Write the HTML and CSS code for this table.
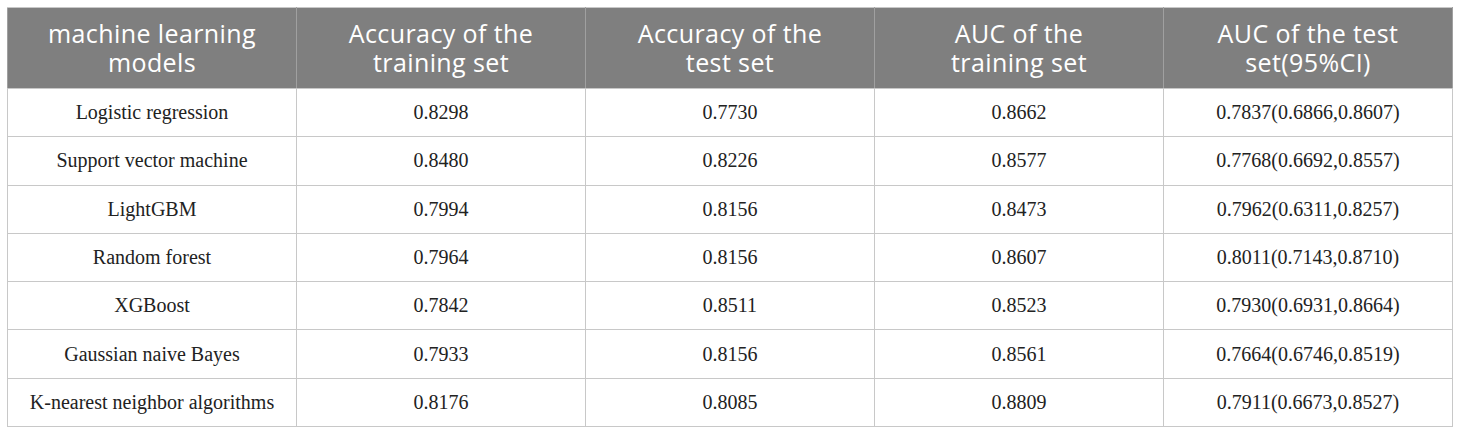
FILE: index.html
```html
<!DOCTYPE html>
<html>
<head>
<meta charset="utf-8">
<link rel="stylesheet" href="styles.css">
</head>
<body>
<table class="results">
  <thead>
    <tr>
      <th>machine learning<br>models</th>
      <th>Accuracy of the<br>training set</th>
      <th>Accuracy of the<br>test set</th>
      <th>AUC of the<br>training set</th>
      <th>AUC of the test<br>set(95%CI)</th>
    </tr>
  </thead>
  <tbody>
    <tr><td>Logistic regression</td><td>0.8298</td><td>0.7730</td><td>0.8662</td><td>0.7837(0.6866,0.8607)</td></tr>
    <tr><td>Support vector machine</td><td>0.8480</td><td>0.8226</td><td>0.8577</td><td>0.7768(0.6692,0.8557)</td></tr>
    <tr><td>LightGBM</td><td>0.7994</td><td>0.8156</td><td>0.8473</td><td>0.7962(0.6311,0.8257)</td></tr>
    <tr><td>Random forest</td><td>0.7964</td><td>0.8156</td><td>0.8607</td><td>0.8011(0.7143,0.8710)</td></tr>
    <tr><td>XGBoost</td><td>0.7842</td><td>0.8511</td><td>0.8523</td><td>0.7930(0.6931,0.8664)</td></tr>
    <tr><td>Gaussian naive Bayes</td><td>0.7933</td><td>0.8156</td><td>0.8561</td><td>0.7664(0.6746,0.8519)</td></tr>
    <tr><td>K-nearest neighbor algorithms</td><td>0.8176</td><td>0.8085</td><td>0.8809</td><td>0.7911(0.6673,0.8527)</td></tr>
  </tbody>
</table>
</body>
</html>
```
FILE: styles.css
```css
html, body {
  margin: 0;
  padding: 0;
  background: #ffffff;
}
body {
  padding: 7px;
}
.results {
  border-collapse: collapse;
  width: 1446px;
  table-layout: fixed;
}
.results th,
.results td {
  border: 1px solid #c8c8c8;
  text-align: center;
  vertical-align: middle;
  padding: 0 6px;
}
.results th {
  background: #7f7f7f;
  color: #ffffff;
  font-family: "Open Sans", "Noto Sans", sans-serif;
  font-weight: 400;
  font-size: 25px;
  letter-spacing: 0.4px;
  line-height: 29px;
  height: 80px;
  border-color: #c8c8c8 #a0a0a0;
}
.results td {
  font-family: "Liberation Serif", "Times New Roman", serif;
  font-size: 20px;
  color: #222222;
  height: 47.3px;
}
```
